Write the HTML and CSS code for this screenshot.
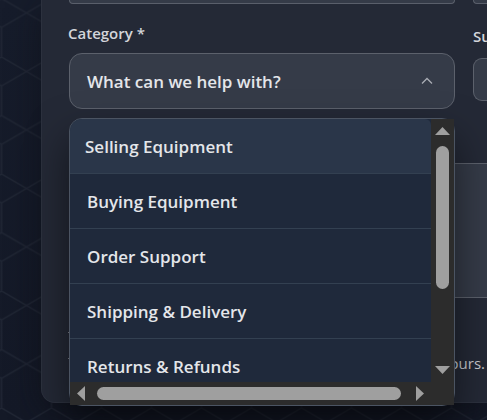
FILE: index.html
```html
<!DOCTYPE html>
<html lang="en">
<head>
<meta charset="utf-8">
<meta name="viewport" content="width=device-width, initial-scale=1">
<title>Support request</title>
<link rel="stylesheet" href="styles.css">
</head>
<body>
<svg class="backdrop" aria-hidden="true">
  <defs>
    <pattern id="hex" x="1.5" y="-1.5" width="50" height="58.5" patternUnits="userSpaceOnUse">
      <path d="M0 0L50 29M50 0L0 29M0 29V58.5M50 29V58.5" fill="none" stroke="#212735" stroke-width="1.4"/>
    </pattern>
  </defs>
  <rect width="100%" height="100%" fill="url(#hex)"/>
</svg>
<main class="panel">
  <form class="form">
    <div class="row">
      <div class="field-end"></div>
      <div class="field-end"></div>
    </div>
    <div class="row">
      <div class="field field-category">
        <label class="label" for="category">Category *</label>
        <div class="picker">
          <button class="trigger" id="category" type="button" aria-haspopup="listbox" aria-expanded="true">
            <span>What can we help with?</span>
            <svg class="chevron" viewBox="0 0 12 8" aria-hidden="true"><path d="M1 6.5L6 1.5L11 6.5"/></svg>
          </button>
          <div class="menu">
            <ul class="options" role="listbox">
              <li class="option option-active" role="option" aria-selected="true">Selling Equipment</li>
              <li class="option" role="option">Buying Equipment</li>
              <li class="option" role="option">Order Support</li>
              <li class="option" role="option">Shipping &amp; Delivery</li>
              <li class="option" role="option">Returns &amp; Refunds</li>
            </ul>
            <div class="bar bar-y">
              <svg class="arrow-y" viewBox="0 0 15 8" aria-hidden="true"><path d="M0 8L7.5 0L15 8Z"/></svg>
              <div class="track-y"><div class="thumb-y"></div></div>
              <svg class="arrow-y" viewBox="0 0 15 8" aria-hidden="true"><path d="M0 0L7.5 8L15 0Z"/></svg>
            </div>
            <div class="bar bar-x">
              <svg class="arrow-x" viewBox="0 0 8 15" aria-hidden="true"><path d="M8 0L0 7.5L8 15Z"/></svg>
              <div class="thumb-x"></div>
              <svg class="arrow-x" viewBox="0 0 8 15" aria-hidden="true"><path d="M0 0L8 7.5L0 15Z"/></svg>
            </div>
          </div>
        </div>
      </div>
      <div class="field field-subject">
        <label class="label" for="subject">Su</label>
        <input class="input" id="subject" type="text">
      </div>
    </div>
    <textarea class="message" aria-label="Message"></textarea>
    <div class="footer">
      <div class="badge"></div>
      <p class="note">ours.</p>
    </div>
  </form>
</main>
</body>
</html>
```
FILE: styles.css
```css
* {
  box-sizing: border-box;
}

body {
  margin: 0;
  min-height: 100vh;
  overflow: hidden;
  background: linear-gradient(#161c2b, #141927);
  color: #e4e6ea;
  font-family: "Open Sans", "Noto Sans", sans-serif;
}

.backdrop {
  position: absolute;
  inset: 0;
  width: 100%;
  height: 100%;
}

.panel {
  position: relative;
  margin-left: 41px;
  padding: 0 0 29px 27px;
  border: 1px solid #2c313e;
  border-width: 0 0 1px 1px;
  border-radius: 0 0 0 14px;
  background: #242936;
  box-shadow: 0 8px 32px rgba(14, 15, 22, 0.6);
}

.form {
  display: flex;
  flex-direction: column;
}

.row {
  display: grid;
  grid-template-columns: minmax(0, 1fr) 14px;
  column-gap: 18px;
}

.field-end {
  height: 4px;
  border: 1px solid #5a5f6b;
  border-top: 0;
  border-radius: 0 0 10px 10px;
  background: #353b48;
}

.field-end + .field-end {
  border-right: 0;
  border-radius: 0 0 0 10px;
}

.field {
  display: flex;
  flex-direction: column;
}

.field-category {
  gap: 10px;
  padding-top: 19px;
}

.field-subject {
  gap: 12px;
  padding-top: 22px;
}

.label {
  color: #d3d5da;
  font-size: 15px;
  font-weight: 600;
  line-height: 20px;
}

.field-category .label {
  margin-left: -1px;
}

.picker {
  position: relative;
}

.trigger {
  display: flex;
  align-items: center;
  justify-content: space-between;
  width: 100%;
  height: 56px;
  padding: 0 21px 0 17px;
  border: 1px solid #5c616c;
  border-radius: 13px;
  background: #353b48;
  color: #e4e6ea;
  font: inherit;
  font-size: 17px;
  font-weight: 600;
}

.chevron {
  width: 12px;
  height: 8px;
  fill: none;
  stroke: #a9acb4;
  stroke-width: 1.3;
}

.input {
  width: 100%;
  height: 43px;
  border: 1px solid #5c616c;
  border-right: 0;
  border-radius: 9px 0 0 9px;
  background: #353b48;
}

.menu {
  position: absolute;
  top: 65px;
  left: 0;
  z-index: 1;
  display: grid;
  grid-template-columns: minmax(0, 1fr) 23px;
  grid-template-rows: 263px 23px;
  width: 100%;
  border: 1px solid #4b5462;
  border-radius: 13px;
  background: #1f293b;
  box-shadow: 0 20px 40px rgba(0, 0, 0, 0.5);
}

.options {
  margin: 0;
  padding: 0;
  overflow: hidden;
  border-radius: 12px 0 0 0;
  list-style: none;
}

.option {
  height: 55px;
  padding-left: 17px;
  border-bottom: 1px solid #334051;
  font-size: 17px;
  font-weight: 600;
  line-height: 55px;
}

.option-active {
  padding-left: 15px;
  border-radius: 0 6px 0 0;
  background: #2a3649;
}

.bar {
  display: flex;
  align-items: center;
  background: #2c2c2c;
}

.bar-y {
  flex-direction: column;
  padding: 8px 0;
}

.bar-x {
  grid-column: 1 / -1;
  gap: 12px;
  padding: 0 30px 0 7px;
}

.arrow-y {
  width: 15px;
  height: 8px;
  fill: #9f9f9f;
}

.arrow-x {
  width: 8px;
  height: 15px;
  fill: #9f9f9f;
}

.track-y {
  flex: 1;
  padding-top: 11px;
}

.thumb-y {
  width: 13px;
  height: 143px;
  border-radius: 7px;
  background: #9f9f9f;
}

.thumb-x {
  flex: 1;
  height: 13px;
  margin-right: 3px;
  border-radius: 7px;
  background: #9f9f9f;
}

.message {
  display: block;
  height: 135px;
  margin-top: 54px;
  border: 1px solid #5c616c;
  border-right: 0;
  border-radius: 10px 0 0 10px;
  background: #353b48;
  resize: none;
}

.footer {
  display: flex;
  align-items: flex-start;
  justify-content: space-between;
  padding: 34px 2px 0 0;
}

.badge {
  width: 40px;
  height: 27px;
  margin-left: -1px;
  border: 1px solid #7b7e87;
  border-width: 1px 0;
}

.note {
  margin: 21px 0 0;
  color: #c9cbd0;
  font-size: 15px;
  line-height: 20px;
}
```
